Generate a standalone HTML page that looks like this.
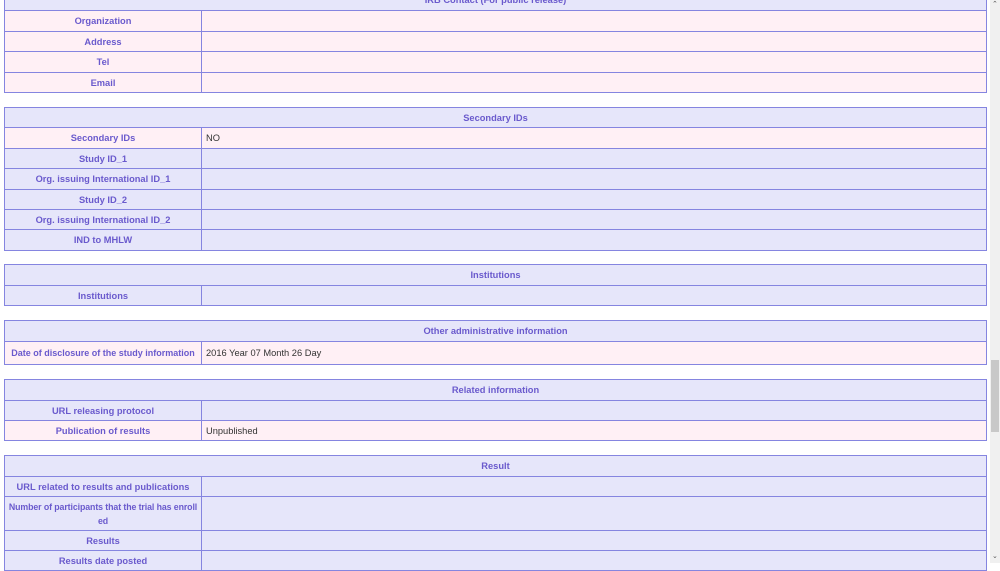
<!DOCTYPE html>
<html><head><style>
body{margin:0;width:1000px;height:563px;overflow:hidden;background:#fff;font-family:"Liberation Sans",sans-serif;font-size:9.3px;position:relative}
.r{position:absolute;left:4px;width:983px;box-sizing:border-box;border:1px solid #8585e0;background:#e6e6fa;display:flex}
.p{background:#fff0f5}
.l{width:197px;border-right:1px solid #8585e0;color:#6a5acd;font-weight:bold;text-align:center;display:flex;align-items:center;justify-content:center;line-height:14px;padding:0;box-sizing:border-box;white-space:nowrap}
.v{flex:1;display:flex;align-items:center;padding-left:4px;color:#333}
.h{justify-content:center;align-items:center;color:#6a5acd;font-weight:bold}
#sb{position:absolute;right:0;top:0;width:10px;height:563px;background:#f0f0f0}
#th{position:absolute;right:1px;top:360px;width:8px;height:72px;background:#c8c8c8}
.ar{position:absolute;left:2px;font-size:7px;color:#555;line-height:8px}
</style></head><body>
<div class="r h" style="top:-11px;height:22px">IRB Contact (For public release)</div>
<div class="r p" style="top:10px;height:22px"><div class="l">Organization</div><div class="v"></div></div>
<div class="r p" style="top:31px;height:21px"><div class="l">Address</div><div class="v"></div></div>
<div class="r p" style="top:51px;height:22px"><div class="l">Tel</div><div class="v"></div></div>
<div class="r p" style="top:72px;height:21px"><div class="l">Email</div><div class="v"></div></div>

<div class="r h" style="top:107px;height:21px">Secondary IDs</div>
<div class="r p" style="top:127px;height:22px"><div class="l">Secondary IDs</div><div class="v">NO</div></div>
<div class="r" style="top:148px;height:21px"><div class="l">Study ID_1</div><div class="v"></div></div>
<div class="r" style="top:168px;height:22px"><div class="l">Org. issuing International ID_1</div><div class="v"></div></div>
<div class="r" style="top:189px;height:21px"><div class="l">Study ID_2</div><div class="v"></div></div>
<div class="r" style="top:209px;height:21px"><div class="l">Org. issuing International ID_2</div><div class="v"></div></div>
<div class="r" style="top:229px;height:22px"><div class="l">IND to MHLW</div><div class="v"></div></div>

<div class="r h" style="top:264px;height:22px">Institutions</div>
<div class="r" style="top:285px;height:21px"><div class="l">Institutions</div><div class="v"></div></div>

<div class="r h" style="top:320px;height:22px">Other administrative information</div>
<div class="r p" style="top:341px;height:24px"><div class="l" style="font-size:9px">Date of disclosure of the study information</div><div class="v">2016 Year 07 Month 26 Day</div></div>

<div class="r h" style="top:379px;height:22px">Related information</div>
<div class="r" style="top:400px;height:21px"><div class="l">URL releasing protocol</div><div class="v"></div></div>
<div class="r p" style="top:420px;height:21px"><div class="l">Publication of results</div><div class="v">Unpublished</div></div>

<div class="r h" style="top:455px;height:22px">Result</div>
<div class="r" style="top:476px;height:21px"><div class="l">URL related to results and publications</div><div class="v"></div></div>
<div class="r" style="top:496px;height:35px"><div class="l" style="font-size:8.8px;letter-spacing:-0.1px">Number of participants that the trial has enroll<br>ed</div><div class="v"></div></div>
<div class="r" style="top:530px;height:21px"><div class="l">Results</div><div class="v"></div></div>
<div class="r" style="top:550px;height:21px"><div class="l">Results date posted</div><div class="v"></div></div>

<div id="sb"><div class="ar" style="top:1px">&#8963;</div><div id="th"></div><div class="ar" style="top:553px">&#8964;</div></div>
</body></html>
